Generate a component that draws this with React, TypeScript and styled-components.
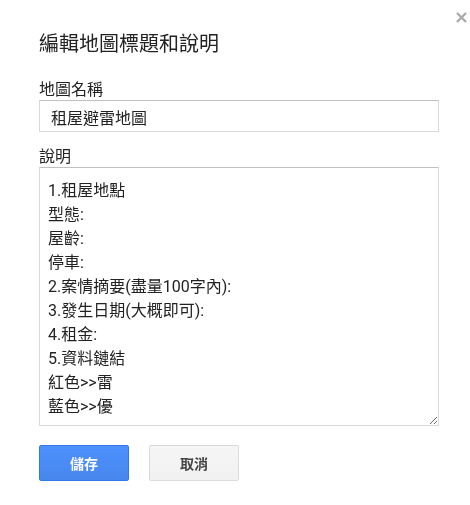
import React, { useEffect, useRef } from 'react';
import styled, { createGlobalStyle } from 'styled-components';

const GlobalStyle = createGlobalStyle`
	body {
		margin: 0;
		background: #fff;
		font-family: Roboto, "Noto Sans CJK TC", "Noto Sans", sans-serif;
		color: #222;
	}
`;

const Dialog = styled.div`
	position: relative;
	width: 470px;
	height: 505px;
	box-sizing: border-box;
	padding: 32px 31px 0 39px;
	background: #fff;
`;

const CloseButton = styled.button`
	position: absolute;
	top: 11px;
	right: 2px;
	width: 13px;
	height: 13px;
	padding: 0;
	border: 0;
	background: transparent;
	cursor: pointer;
	display: flex;
	align-items: center;
	justify-content: center;
`;

const Title = styled.div`
	font-size: 20px;
	line-height: 24px;
	color: #222;
	margin-bottom: 25px;
`;

const Label = styled.label<{ $gap?: number }>`
	display: block;
	font-size: 16px;
	line-height: 18px;
	margin-top: ${p => p.$gap || 0}px;
	margin-bottom: 1px;
	color: #222;
`;

const TextInput = styled.input`
	display: block;
	width: 400px;
	height: 32px;
	box-sizing: border-box;
	margin: 0;
	padding: 2px 11px 0;
	font: inherit;
	font-size: 16px;
	color: #222;
	border: 1px solid #d9d9d9;
	border-top-color: #c0c0c0;
	border-radius: 1px;
	outline: none;
`;

const TextArea = styled.textarea`
	display: block;
	width: 400px;
	height: 259px;
	box-sizing: border-box;
	margin: 0;
	padding: 11px 8px 8px;
	font: inherit;
	font-size: 16px;
	line-height: 24px;
	color: #222;
	border: 1px solid #d9d9d9;
	border-top-color: #c0c0c0;
	border-radius: 1px;
	outline: none;
	resize: both;
	caret-color: #222;
`;

const Actions = styled.div`
	display: flex;
	gap: 20px;
	margin-top: 19px;
`;

const Button = styled.button<{ $primary?: boolean }>`
	width: 90px;
	height: 36px;
	box-sizing: border-box;
	border-radius: 2px;
	font-family: inherit;
	font-size: 14px;
	font-weight: bold;
	cursor: pointer;
	border: 1px solid ${p => (p.$primary ? '#3079ed' : 'rgba(0,0,0,0.1)')};
	color: ${p => (p.$primary ? '#fff' : '#444')};
	background: ${p => (p.$primary
		? 'linear-gradient(#4d90fe, #4787ed)'
		: 'linear-gradient(#f5f5f5, #f1f1f1)')};
`;

const description = [
	'1.租屋地點',
	'型態:',
	'屋齡:',
	'停車:',
	'2.案情摘要(盡量100字內):',
	'3.發生日期(大概即可):',
	'4.租金:',
	'5.資料鏈結',
	'紅色>>雷',
	'藍色>>優',
].join('\n');

export default function App() {
	const areaRef = useRef<HTMLTextAreaElement>(null);

	useEffect(() => {
		const el = areaRef.current;
		if (el) {
			el.focus();
			el.setSelectionRange(0, 0);
			el.scrollTop = 0;
		}
	}, []);

	return (
		<>
			<GlobalStyle/>
			<Dialog>
				<CloseButton aria-label="關閉">
					<svg width="11" height="11" viewBox="0 0 11 11">
						<path d="M1 1 L10 10 M10 1 L1 10" stroke="#aaa" strokeWidth="2.4"/>
					</svg>
				</CloseButton>
				<Title>編輯地圖標題和說明</Title>
				<Label htmlFor="map-name">地圖名稱</Label>
				<TextInput id="map-name" defaultValue="租屋避雷地圖"/>
				<Label htmlFor="map-desc" $gap={16}>說明</Label>
				<TextArea id="map-desc" ref={areaRef} defaultValue={description}/>
				<Actions>
					<Button $primary>儲存</Button>
					<Button>取消</Button>
				</Actions>
			</Dialog>
		</>
	);
}
